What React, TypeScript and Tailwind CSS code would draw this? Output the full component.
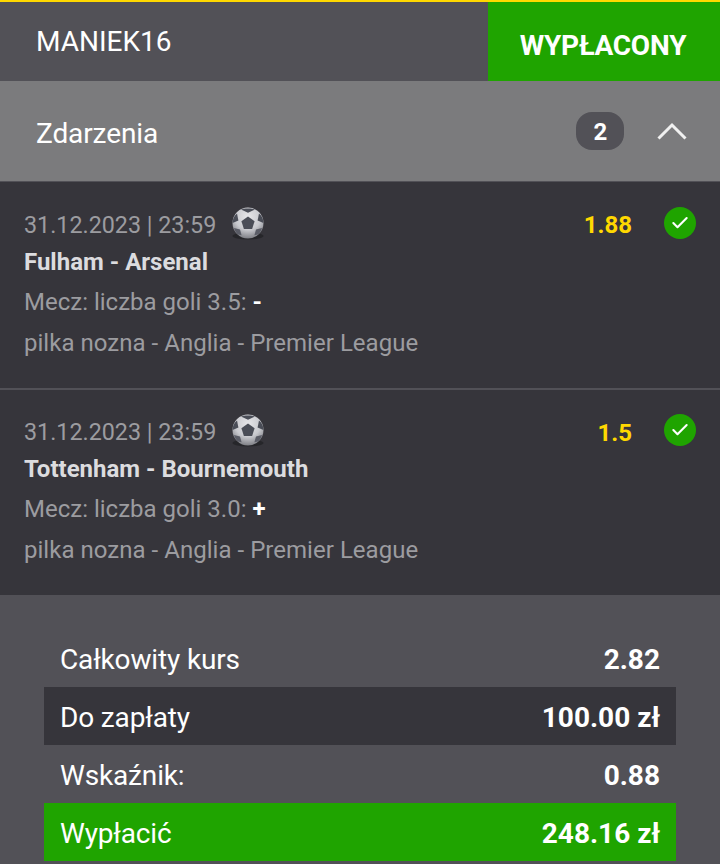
import React from 'react';
import { Check } from 'lucide-react';

interface BetEvent {
  date: string;
  odds: string;
  teams: string;
  market: string;
  pick: string;
  league: string;
}

const events: BetEvent[] = [
  {
    date: '31.12.2023 | 23:59',
    odds: '1.88',
    teams: 'Fulham - Arsenal',
    market: 'Mecz: liczba goli 3.5:',
    pick: '-',
    league: 'pilka nozna - Anglia - Premier League',
  },
  {
    date: '31.12.2023 | 23:59',
    odds: '1.5',
    teams: 'Tottenham - Bournemouth',
    market: 'Mecz: liczba goli 3.0:',
    pick: '+',
    league: 'pilka nozna - Anglia - Premier League',
  },
];

function SoccerBall({ id }: { id: string }) {
  return (
    <svg width="36" height="36" viewBox="0 0 36 36" className="mt-[2px] shrink-0">
      <defs>
        <radialGradient id={id} cx="50%" cy="30%" r="70%">
          <stop offset="0%" stopColor="#e6e6e9" />
          <stop offset="60%" stopColor="#c8c9ce" />
          <stop offset="100%" stopColor="#7f8086" />
        </radialGradient>
      </defs>
      <ellipse cx="18" cy="30" rx="15.5" ry="3.5" fill="#232327" opacity="0.8" />
      <circle cx="18" cy="17" r="15.5" fill={`url(#${id})`} />
      <path d="M18 10.5l6.6 4.8-2.5 7.8h-8.2l-2.5-7.8z" fill="#4a4d57" />
      <path d="M11 3.6C13 2 23 2 25 3.6L18 6.8z" fill="#4a4d57" />
      <path d="M2.6 17C2.6 12.5 4.5 9.5 7 7.5l1.4 7z" fill="#4a4d57" />
      <path d="M33.4 17c0-4.5-1.9-7.5-4.4-9.5l-1.4 7z" fill="#4a4d57" />
      <path d="M8 28.6c-1.8-1.6-3.4-4-4-6.6l6 1.4 1.6 5.8z" fill="#5a5c66" />
      <path d="M28 28.6c1.8-1.6 3.4-4 4-6.6l-6 1.4-1.6 5.8z" fill="#5a5c66" />
    </svg>
  );
}

function EventRow({ event, index }: { event: BetEvent; index: number }) {
  const first = index === 0;
  return (
    <div className={`relative px-6 ${first ? 'h-[206px] pt-[23px]' : 'h-[205px] pt-[22px]'}`}>
      <div className="flex h-[36px] items-center gap-[14px] text-[#9c9ca0]">
        <span className="mt-[4px] text-[23.3px]">{event.date}</span>
        <SoccerBall id={`ball-${index}`} />
      </div>
      <div className="mt-[3px] text-[24px] leading-[36px] font-bold text-[#dcdcdf]">{event.teams}</div>
      <div className="mt-[4px] text-[24px] leading-[36px] text-[#9c9ca0]">
        {event.market} <span className="font-bold text-white">{event.pick}</span>
      </div>
      <div className="mt-[5px] text-[24px] leading-[36px] tracking-[0.03px] text-[#9c9ca0]">{event.league}</div>
      {/* odds and settled tick sit over the top right of the row */}
      <div className="absolute top-[24px] right-6 flex items-start gap-[32px]">
        <span className="mt-[1px] text-[24px] font-bold text-[#ffd800]">{event.odds}</span>
        <span
          className={`flex h-8 w-8 items-center justify-center rounded-full bg-[#1fa400] ${first ? 'mt-[1px]' : ''}`}
        >
          <Check size={20} strokeWidth={2.5} className="text-white" />
        </span>
      </div>
    </div>
  );
}

function SummaryRow({ label, value, className = '' }: { label: string; value: string; className?: string }) {
  return (
    <div className={`flex h-[58px] items-center justify-between px-4 pt-1 text-[28px] text-white ${className}`}>
      <span className="tracking-[-0.15px]">{label}</span>
      <span className="font-bold">{value}</span>
    </div>
  );
}

export default function App() {
  return (
    <div className="h-[864px] w-[720px] overflow-hidden bg-[#525157] font-['Roboto',sans-serif]">
      <div className="h-[2px] bg-[#ffd800]" />
      <div className="flex h-[79px] items-stretch justify-between">
        <div className="flex items-center pl-9 text-[28px] text-white">MANIEK16</div>
        <div className="flex w-[232px] items-center justify-center bg-[#1fa400] pt-2 pr-[2px] text-[28px] font-bold tracking-[-0.2px] text-white">
          WYPŁACONY
        </div>
      </div>
      <div className="flex h-[101px] items-center justify-between border-b border-[#525157] bg-[#7b7b7d] pr-8 pl-9">
        <span className="pt-[6px] text-[28px] tracking-[-0.1px] text-white">Zdarzenia</span>
        <div className="flex items-center gap-8">
          <span className="flex h-[38px] w-[48px] items-center justify-center rounded-[16px] bg-[#525157] pt-[2px] pl-px text-[24px] font-bold text-white">
            2
          </span>
          <svg width="32" height="20" viewBox="0 0 32 20" fill="none" stroke="#f0f0f0" strokeWidth="3">
            <path d="M2.5 17.5L16 4l13.5 13.5" />
          </svg>
        </div>
      </div>
      <div className="bg-[#36353b]">
        <EventRow event={events[0]} index={0} />
        <div className="h-[2px] bg-[#525157]" />
        <EventRow event={events[1]} index={1} />
      </div>
      <div className="mx-11 mt-[34px]">
        <SummaryRow label="Całkowity kurs" value="2.82" />
        <SummaryRow label="Do zapłaty" value="100.00 zł" className="bg-[#36353b]" />
        <SummaryRow label="Wskaźnik:" value="0.88" />
        <SummaryRow label="Wypłacić" value="248.16 zł" className="bg-[#1fa400]" />
      </div>
    </div>
  );
}
